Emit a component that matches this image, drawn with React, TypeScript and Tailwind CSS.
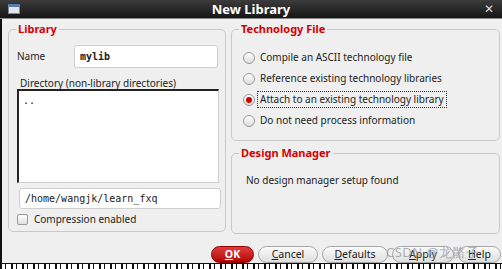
import React from 'react';

const sans = { fontFamily: '"Noto Sans", "DejaVu Sans", sans-serif' };
const mono = { fontFamily: '"DejaVu Sans Mono", "Liberation Mono", monospace' };

const Radio = ({ checked, label, focused }: { checked?: boolean; label: string; focused?: boolean }) => (
    <div className="flex items-center h-[21px]">
        <span className="w-[12px] h-[12px] rounded-full border border-[#9a9a9a] bg-gradient-to-b from-[#ffffff] to-[#dcdcdc] flex items-center justify-center shrink-0">
            {checked && <span className="w-[6px] h-[6px] rounded-full bg-[#d40000]" />}
        </span>
        <span className={`ml-[3px] px-[2px] leading-[15px] text-[10px] text-[#222] ${focused ? 'outline-1 outline-dotted outline-[#333]' : ''}`}>{label}</span>
    </div>
);

const Button = ({ label, u, w, primary }: { label: string; u: string; w: string; primary?: boolean }) => {
    const rest = label.slice(1);
    return (
        <div
            className={`${w} h-[17px] rounded-full flex items-center justify-center text-[10.5px] ${
                primary
                    ? 'bg-gradient-to-b from-[#e23a3a] to-[#b00000] border border-[#8a0000] text-white font-bold'
                    : 'bg-gradient-to-b from-[#fbfbfb] to-[#dedede] border border-[#a5a5a5] text-[#222]'
            }`}
        >
            <span className="underline">{u}</span>
            {rest}
        </div>
    );
};

const Legend = ({ children }: { children: React.ReactNode }) => (
    <legend className="px-[2px] ml-[7px] text-[11px] font-bold text-[#d40000] leading-[14px]">{children}</legend>
);

const App = () => {
    return (
        <div className="w-[502px] h-[269px] bg-[#efefef] relative overflow-hidden" style={sans}>
            {/* title bar */}
            <div className="h-[19px] bg-gradient-to-b from-[#3c3c3c] to-[#161616] border-b border-[#8c8c8c] flex items-center relative">
                <div className="ml-[8px] w-[12px] h-[10px] bg-[#dfe6ee] border border-[#7a8a9a] border-t-[3px] border-t-[#5a7ca8]" />
                <div className="absolute left-0 right-0 text-center text-white font-bold text-[13px] leading-[19px]">New Library</div>
                <div className="ml-auto mr-[8px] text-[#d8d8d8] font-bold text-[12px] leading-none">✕</div>
            </div>

            <div className="border-l-2 border-[#111] h-[244px] pl-[6px] pt-[3px]">
                <div className="flex gap-[5px]">
                    {/* Library */}
                    <fieldset className="w-[218px] h-[210px] border border-[#c9c9c9] rounded-[5px]">
                        <Legend>Library</Legend>
                        <div className="pl-[8px]">
                            <div className="flex items-center mt-[9px]">
                                <span className="w-[57px] text-[10px] text-[#222]">Name</span>
                                <div className="w-[144px] h-[23px] bg-white border border-[#cfcfcf] rounded-[3px] flex items-center pl-[5px] text-[10px] font-bold text-[#222]" style={mono}>
                                    mylib
                                </div>
                            </div>
                            <div className="mt-[8px] ml-[3px] text-[10px] text-[#222] leading-[14px]">Directory (non-library directories)</div>
                            <div className="-mt-[1px] w-[202px] h-[94px] bg-white border-t-2 border-l-2 border-[#222] border-r border-b border-r-[#cfcfcf] border-b-[#cfcfcf] pl-[4px] pt-[2px] text-[10px] text-[#222]" style={mono}>
                                ..
                            </div>
                            <div className="mt-[5px] ml-[2px] w-[202px] h-[21px] bg-white border border-[#cfcfcf] rounded-[3px] flex items-center pl-[5px] text-[10px] text-[#222]" style={mono}>
                                /home/wangjk/learn_fxq
                            </div>
                            <div className="flex items-center mt-[3px]">
                                <span className="w-[11px] h-[11px] border border-[#9a9a9a] rounded-[2px] bg-gradient-to-b from-white to-[#e0e0e0]" />
                                <span className="ml-[6px] text-[10px] text-[#222]">Compression enabled</span>
                            </div>
                        </div>
                    </fieldset>

                    <div className="flex flex-col gap-[5px]">
                        {/* Technology File */}
                        <fieldset className="w-[269px] h-[119px] border border-[#c9c9c9] rounded-[5px]">
                            <Legend>Technology File</Legend>
                            <div className="mt-[11px] pl-[11px]">
                                <Radio label="Compile an ASCII technology file" />
                                <Radio label="Reference existing technology libraries" />
                                <Radio checked focused label="Attach to an existing technology library" />
                                <Radio label="Do not need process information" />
                            </div>
                        </fieldset>
                        {/* Design Manager */}
                        <fieldset className="w-[269px] h-[88px] border border-[#c9c9c9] rounded-[5px]">
                            <Legend>Design Manager</Legend>
                            <div className="mt-[13px] pl-[14px] text-[10px] text-[#222]">No design manager setup found</div>
                        </fieldset>
                    </div>
                </div>

                <div className="flex justify-end gap-[4px] mt-[12px] pr-[1px]">
                    <Button primary u="O" label="OK" w="w-[43px]" />
                    <Button u="C" label="Cancel" w="w-[60px]" />
                    <Button u="D" label="Defaults" w="w-[66px]" />
                    <Button u="A" label="Apply" w="w-[62px]" />
                    <Button u="H" label="Help" w="w-[43px]" />
                </div>
            </div>

            <div className="h-[6px] bg-white border-t border-[#111] bg-[repeating-linear-gradient(90deg,#111_0px,#111_2px,#fff_2px,#fff_5px,#111_5px,#111_6px,#fff_6px,#fff_11px)]" />

            <div className="absolute left-[386px] top-[243px] text-[13px] text-[#9a9a9a]/80 tracking-[0.5px]" style={sans}>CSDN @龙骼子</div>
        </div>
    );
};

export default App;
